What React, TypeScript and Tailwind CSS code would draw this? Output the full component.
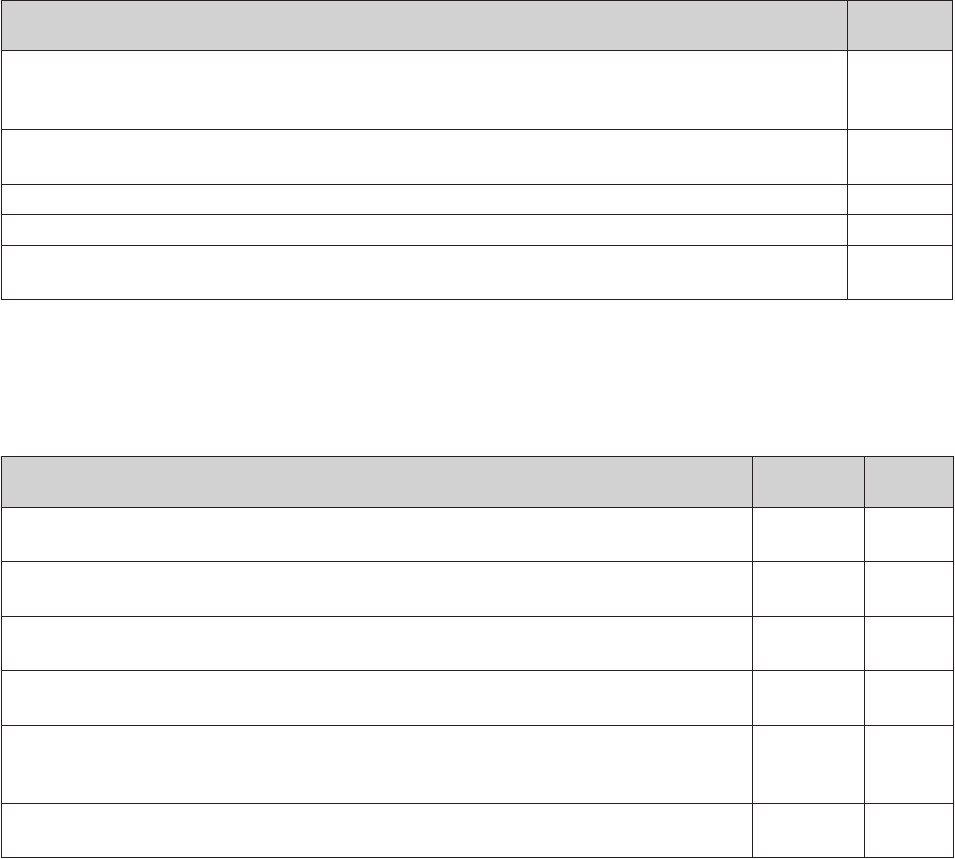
import React from 'react';

type GridTableProps = {
  cols: number[];
  rows: number[];
  className?: string;
};

// Empty ruled table: first row is the grey header band
const GridTable: React.FC<GridTableProps> = ({ cols, rows, className }) => {
  return (
    <div
      className={`border-l border-t border-[#231f20] ${className ?? ''}`}
      style={{ display: 'grid', gridTemplateColumns: cols.map((c) => `${c}px`).join(' '), width: cols.reduce((a, b) => a + b, 1) }}
    >
      {rows.map((h, r) =>
        cols.map((_, c) => (
          <div
            key={`${r}-${c}`}
            className={`border-r border-b border-[#231f20] ${r === 0 ? 'bg-[#d2d2d2]' : 'bg-white'}`}
            style={{ height: h }}
          />
        ))
      )}
    </div>
  );
};

const App: React.FC = () => {
  return (
    <div className="min-h-[859px] w-[955px] bg-white font-['Liberation_Sans',sans-serif]">
      <div className="pl-[1px]">
        <GridTable cols={[846, 105]} rows={[50, 79, 55, 30, 31, 54]} />
        <GridTable cols={[751, 112, 89]} rows={[51, 54, 55, 54, 55, 78, 54]} className="mt-[156px]" />
      </div>
    </div>
  );
};

export default App;
